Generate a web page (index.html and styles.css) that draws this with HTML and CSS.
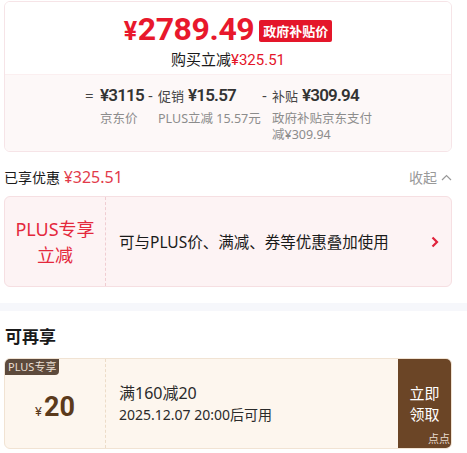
FILE: index.html
```html
<!DOCTYPE html>
<html lang="zh-CN">
<head>
    <meta charset="UTF-8">
    <meta name="viewport" content="width=device-width, initial-scale=1.0">
    <title>价格明细</title>
    <link rel="stylesheet" href="styles.css">
</head>
<body>
    <div class="page">
        <div class="price-card">
            <div class="price-top">
                <div class="price-line">
                    <span class="price-big"><span class="yen">¥</span>2789.49</span>
                    <span class="gov-tag">政府补贴价</span>
                </div>
                <div class="price-sub">购买立减<span class="red">¥325.51</span></div>
            </div>
            <div class="price-calc">
                <div class="calc-col col-a">
                    <div class="calc-main"><span class="op op-eq">=</span><span class="num">¥3115</span></div>
                    <div class="calc-note">京东价</div>
                </div>
                <div class="calc-col col-b">
                    <div class="calc-main"><span class="op">-</span><span class="lbl">促销</span><span class="num">¥15.57</span></div>
                    <div class="calc-note">PLUS立减 15.57元</div>
                </div>
                <div class="calc-col col-c">
                    <div class="calc-main"><span class="op">-</span><span class="lbl">补贴</span><span class="num">¥309.94</span></div>
                    <div class="calc-note">政府补贴京东支付<br>减¥309.94</div>
                </div>
            </div>
        </div>

        <div class="saved-row">
            <div class="saved">已享优惠 <span class="saved-val">¥325.51</span></div>
            <div class="fold">收起
                <svg width="11" height="7" viewBox="0 0 11 7"><path d="M1 6 L5.5 1.5 L10 6" fill="none" stroke="#999" stroke-width="1.2"/></svg>
            </div>
        </div>

        <div class="plus-card">
            <div class="plus-left">PLUS专享<br>立减</div>
            <div class="plus-text">可与PLUS价、满减、券等优惠叠加使用</div>
            <svg class="plus-arrow" width="8" height="12" viewBox="0 0 8 12"><path d="M1.5 1.5 L6 6 L1.5 10.5" fill="none" stroke="#e0233c" stroke-width="2.2"/></svg>
        </div>
    </div>

    <div class="divider"></div>

    <div class="page">
        <h2 class="more-title">可再享</h2>
        <div class="coupon">
            <div class="coupon-left">
                <span class="coupon-tag">PLUS专享</span>
                <span class="coupon-amt"><span class="coupon-yen">¥</span>20</span>
            </div>
            <div class="coupon-mid">
                <div class="coupon-rule">满160减20</div>
                <div class="coupon-time">2025.12.07 20:00后可用</div>
            </div>
            <div class="coupon-btn">
                <span>立即<br>领取</span>
                <span class="coupon-dots">点点</span>
            </div>
        </div>
    </div>
</body>
</html>
```

FILE: styles.css
```css
body {
    margin: 0;
    font-family: "Noto Sans", "Noto Sans CJK SC", sans-serif;
    color: #1a1a1a;
    background: #ffffff;
}
.page {
    padding: 0 15px 0 4px;
}
.price-card {
    margin-top: 1px;
    border: 1px solid #f6e4e7;
    border-radius: 6px;
    overflow: hidden;
}
.price-top {
    height: 72px;
    background: #ffffff;
    text-align: center;
}
.price-line {
    display: flex;
    justify-content: center;
    align-items: center;
    padding-top: 11px;
    height: 35px;
}
.price-big {
    font-family: Roboto, "Noto Sans", sans-serif;
    font-weight: 700;
    font-size: 32px;
    color: #e8182c;
    letter-spacing: -0.4px;
    line-height: 35px;
}
.yen {
    font-size: 25px;
    margin-right: 1px;
}
.gov-tag {
    margin-left: 5px;
    background: #e4162a;
    color: #ffffff;
    font-size: 13px;
    font-weight: 700;
    padding: 0 4px;
    height: 22px;
    line-height: 22px;
    border-radius: 2px;
}
.price-sub {
    font-size: 15px;
    line-height: 20px;
    margin-top: 1px;
}
.red {
    color: #e4162a;
    font-family: Roboto, "Noto Sans", sans-serif;
}
.price-calc {
    background: #fdf8f8;
    border-top: 1px solid #fbeff0;
    height: 77px;
    display: flex;
    padding-left: 80px;
    padding-top: 10px;
    box-sizing: border-box;
}
.calc-col {
    display: flex;
    flex-direction: column;
}
.col-a { width: 63px; }
.col-b { width: 114px; }
.col-c { width: 110px; }
.calc-main {
    display: flex;
    align-items: baseline;
    height: 24px;
    color: #333;
    white-space: nowrap;
}
.op {
    font-size: 15px;
    width: 10px;
    color: #444;
}
.op-eq {
    width: 15px;
}
.lbl {
    font-size: 13px;
    margin-right: 4px;
    color: #444;
}
.num {
    font-family: Roboto, "Noto Sans", sans-serif;
    font-weight: 600;
    font-size: 17px;
    letter-spacing: -0.8px;
    color: #333;
}
.calc-note {
    font-size: 12.5px;
    line-height: 16px;
    color: #8c8c8c;
    margin-top: 2px;
    padding-left: 10px;
}
.col-a .calc-note { padding-left: 15px; }
.saved-row {
    display: flex;
    justify-content: space-between;
    align-items: center;
    height: 20px;
    margin-top: 15px;
}
.saved {
    font-size: 14px;
}
.saved-val {
    color: #e23a4a;
    font-size: 16px;
    font-family: "Noto Sans", sans-serif;
}
.fold {
    font-size: 14px;
    color: #999;
    display: flex;
    align-items: center;
    gap: 4px;
}
.plus-card {
    margin-top: 9px;
    height: 91px;
    border: 1px solid #f6dfe2;
    border-radius: 6px;
    background: #fdf3f4;
    display: flex;
    align-items: center;
    box-sizing: border-box;
}
.plus-left {
    width: 100px;
    height: 100%;
    border-right: 1px dashed #f0cdd2;
    color: #e4283c;
    font-size: 18px;
    line-height: 26px;
    text-align: center;
    display: flex;
    align-items: center;
    justify-content: center;
}
.plus-text {
    flex: 1;
    padding-left: 13px;
    font-size: 15.5px;
}
.plus-arrow {
    margin-right: 12px;
}
.divider {
    height: 8px;
    background: #f6f7fb;
    margin-top: 16px;
}
.more-title {
    margin: 14px 0 0 1px;
    font-size: 17px;
    font-weight: 700;
    line-height: 24px;
}
.coupon {
    margin-top: 9px;
    height: 91px;
    border: 1px solid #f1e3d3;
    border-radius: 6px;
    background: #fdf6ee;
    display: flex;
    overflow: hidden;
    box-sizing: border-box;
}
.coupon-left {
    position: relative;
    width: 100px;
    border-right: 1px dashed #ecdcc8;
    display: flex;
    align-items: center;
    justify-content: center;
    padding-top: 6px;
}
.coupon-tag {
    position: absolute;
    top: 0;
    left: 0;
    background: #5d4a3c;
    color: #eadfd2;
    font-size: 11px;
    line-height: 16px;
    padding: 0 3px;
    border-bottom-right-radius: 4px;
}
.coupon-amt {
    color: #5b3a1c;
    font-family: Roboto, "Noto Sans", sans-serif;
    font-weight: 700;
    font-size: 27px;
}
.coupon-yen {
    font-size: 13px;
    font-weight: 400;
    margin-right: 2px;
}
.coupon-mid {
    flex: 1;
    padding-left: 13px;
    display: flex;
    flex-direction: column;
    justify-content: center;
    color: #2a2a2a;
}
.coupon-rule {
    font-size: 16px;
    line-height: 21px;
}
.coupon-time {
    font-size: 14px;
    line-height: 21px;
}
.coupon-btn {
    position: relative;
    width: 53px;
    background: #6b4526;
    color: #ffffff;
    font-size: 15px;
    line-height: 21px;
    display: flex;
    align-items: center;
    justify-content: center;
    text-align: center;
}
.coupon-dots {
    position: absolute;
    right: 1px;
    bottom: 2px;
    font-size: 11px;
    line-height: 14px;
    color: #e8dccf;
}
```
